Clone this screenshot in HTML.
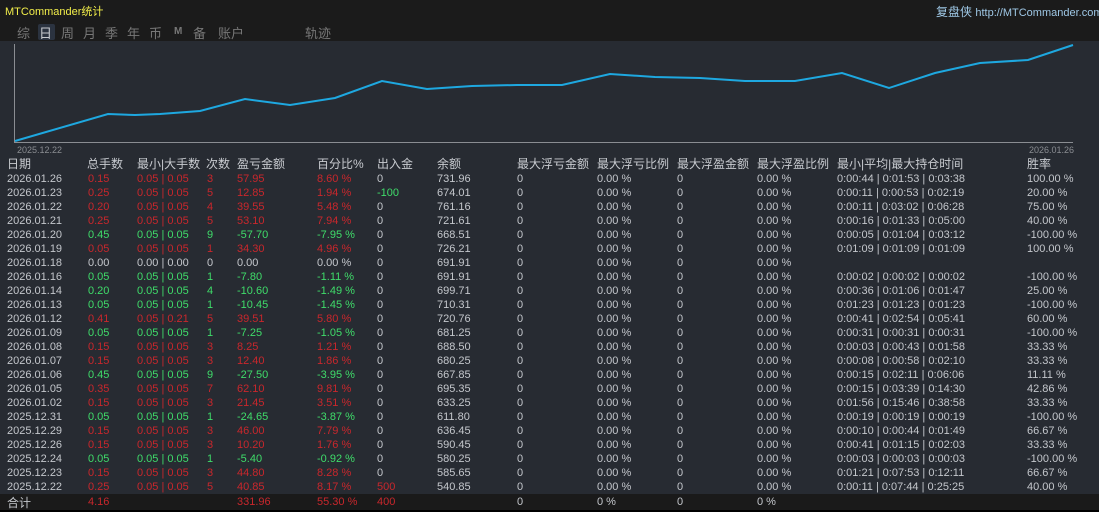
<!DOCTYPE html>
<html><head><meta charset="utf-8"><style>
*{margin:0;padding:0;box-sizing:border-box}
body{width:1099px;height:512px;overflow:hidden;background:#272b32;font-family:"Liberation Sans","Noto Sans CJK SC",sans-serif;position:relative;color:#c4c7cc}
#top{position:absolute;left:0;top:0;width:1099px;height:41px;background:#1b1b1b}
.t{position:absolute;white-space:nowrap}
.r{color:#c9272c}.g{color:#3fdc6a}
.row{position:absolute;left:0;width:1099px;height:14px;font-size:11px;line-height:14px}
.row span{position:absolute;white-space:nowrap}
.hd{position:absolute;top:156px;font-size:12px;line-height:16px;color:#c8cbd0;white-space:nowrap}
.tb{position:absolute;top:23px;font-size:13px;color:#777}
#tot{position:absolute;left:0;top:494px;width:1099px;height:16px;background:#1a1a1a}
</style></head><body>
<div id="top"></div>
<div class="t" style="left:5px;top:3px;font-size:11px;color:#f2ee4a">MTCommander统计</div>
<div class="t" style="left:936px;top:3px;font-size:12px;color:#9fc8e6">复盘侠 <span style="font-size:11px">http://MTCommander.com</span></div>
<div class="t" style="left:38px;top:24px;width:17px;height:16px;background:#2b3340;border-radius:2px"></div>
<div class="tb" style="left:17px">综</div><div class="tb" style="left:39px;color:#c8cbd0">日</div><div class="tb" style="left:61px">周</div><div class="tb" style="left:83px">月</div><div class="tb" style="left:105px">季</div><div class="tb" style="left:127px">年</div><div class="tb" style="left:149px">币</div><div class="tb" style="left:174px;font-size:10px;font-weight:bold;top:26px">M</div><div class="tb" style="left:193px">备</div><div class="tb" style="left:218px">账户</div>
<div class="tb" style="left:305px">轨迹</div>
<svg class="t" style="left:0;top:41px" width="1099" height="115">
<line x1="14.5" y1="3" x2="14.5" y2="101" stroke="#8a8d92"/>
<line x1="14" y1="101.5" x2="1073" y2="101.5" stroke="#8a8d92"/>
<polyline fill="none" stroke="#1ea8e0" stroke-width="2" points="15,100 108,73 135,74 160,73 200,70 245,58 290,64 335,57 382,40 427,48 472,45 517,44 562,44 610,33 655,36 700,37 745,40 795,40 842,32 889,47 935,32 980,22 1028,19 1073,4"/>
<text x="17" y="112" font-size="9" fill="#8a8d92" font-family="Liberation Sans">2025.12.22</text>
<text x="1029" y="112" font-size="9" fill="#8a8d92" font-family="Liberation Sans">2026.01.26</text>
</svg>
<div class="hd" style="left:7px">日期</div><div class="hd" style="left:87px">总手数</div><div class="hd" style="left:137px">最小|大手数</div><div class="hd" style="left:206px">次数</div><div class="hd" style="left:237px">盈亏金额</div><div class="hd" style="left:317px">百分比%</div><div class="hd" style="left:377px">出入金</div><div class="hd" style="left:437px">余额</div><div class="hd" style="left:517px">最大浮亏金额</div><div class="hd" style="left:597px">最大浮亏比例</div><div class="hd" style="left:677px">最大浮盈金额</div><div class="hd" style="left:757px">最大浮盈比例</div><div class="hd" style="left:837px">最小|平均|最大持仓时间</div><div class="hd" style="left:1027px">胜率</div>
<div id="rows"></div>
<div id="tot"></div>
<div class="t" style="left:7px;top:494px;font-size:12px">合计</div>
<div class="row" style="top:495px"><span class="r" style="left:88px">4.16</span><span class="r" style="left:237px">331.96</span><span class="r" style="left:317px">55.30 %</span><span class="r" style="left:377px">400</span><span style="left:517px">0</span><span style="left:597px">0 %</span><span style="left:677px">0</span><span style="left:757px">0 %</span></div>
<div class="t" style="left:0;top:510px;width:1099px;height:2px;background:#000"></div>
<script>
var d=[
["2026.01.26","r","0.15","0.05 | 0.05","3","57.95","8.60 %","0","731.96","0:00:44 | 0:01:53 | 0:03:38","100.00 %"],
["2026.01.23","r","0.25","0.05 | 0.05","5","12.85","1.94 %","-100","674.01","0:00:11 | 0:00:53 | 0:02:19","20.00 %"],
["2026.01.22","r","0.20","0.05 | 0.05","4","39.55","5.48 %","0","761.16","0:00:11 | 0:03:02 | 0:06:28","75.00 %"],
["2026.01.21","r","0.25","0.05 | 0.05","5","53.10","7.94 %","0","721.61","0:00:16 | 0:01:33 | 0:05:00","40.00 %"],
["2026.01.20","g","0.45","0.05 | 0.05","9","-57.70","-7.95 %","0","668.51","0:00:05 | 0:01:04 | 0:03:12","-100.00 %"],
["2026.01.19","r","0.05","0.05 | 0.05","1","34.30","4.96 %","0","726.21","0:01:09 | 0:01:09 | 0:01:09","100.00 %"],
["2026.01.18","w","0.00","0.00 | 0.00","0","0.00","0.00 %","0","691.91","",""],
["2026.01.16","g","0.05","0.05 | 0.05","1","-7.80","-1.11 %","0","691.91","0:00:02 | 0:00:02 | 0:00:02","-100.00 %"],
["2026.01.14","g","0.20","0.05 | 0.05","4","-10.60","-1.49 %","0","699.71","0:00:36 | 0:01:06 | 0:01:47","25.00 %"],
["2026.01.13","g","0.05","0.05 | 0.05","1","-10.45","-1.45 %","0","710.31","0:01:23 | 0:01:23 | 0:01:23","-100.00 %"],
["2026.01.12","r","0.41","0.05 | 0.21","5","39.51","5.80 %","0","720.76","0:00:41 | 0:02:54 | 0:05:41","60.00 %"],
["2026.01.09","g","0.05","0.05 | 0.05","1","-7.25","-1.05 %","0","681.25","0:00:31 | 0:00:31 | 0:00:31","-100.00 %"],
["2026.01.08","r","0.15","0.05 | 0.05","3","8.25","1.21 %","0","688.50","0:00:03 | 0:00:43 | 0:01:58","33.33 %"],
["2026.01.07","r","0.15","0.05 | 0.05","3","12.40","1.86 %","0","680.25","0:00:08 | 0:00:58 | 0:02:10","33.33 %"],
["2026.01.06","g","0.45","0.05 | 0.05","9","-27.50","-3.95 %","0","667.85","0:00:15 | 0:02:11 | 0:06:06","11.11 %"],
["2026.01.05","r","0.35","0.05 | 0.05","7","62.10","9.81 %","0","695.35","0:00:15 | 0:03:39 | 0:14:30","42.86 %"],
["2026.01.02","r","0.15","0.05 | 0.05","3","21.45","3.51 %","0","633.25","0:01:56 | 0:15:46 | 0:38:58","33.33 %"],
["2025.12.31","g","0.05","0.05 | 0.05","1","-24.65","-3.87 %","0","611.80","0:00:19 | 0:00:19 | 0:00:19","-100.00 %"],
["2025.12.29","r","0.15","0.05 | 0.05","3","46.00","7.79 %","0","636.45","0:00:10 | 0:00:44 | 0:01:49","66.67 %"],
["2025.12.26","r","0.15","0.05 | 0.05","3","10.20","1.76 %","0","590.45","0:00:41 | 0:01:15 | 0:02:03","33.33 %"],
["2025.12.24","g","0.05","0.05 | 0.05","1","-5.40","-0.92 %","0","580.25","0:00:03 | 0:00:03 | 0:00:03","-100.00 %"],
["2025.12.23","r","0.15","0.05 | 0.05","3","44.80","8.28 %","0","585.65","0:01:21 | 0:07:53 | 0:12:11","66.67 %"],
["2025.12.22","r","0.25","0.05 | 0.05","5","40.85","8.17 %","500","540.85","0:00:11 | 0:07:44 | 0:25:25","40.00 %"]];
var h="";
d.forEach(function(r,i){
var c=r[1]=="w"?"":r[1];var io=r[7]=="0"?"":(r[7][0]=="-"?"g":"r");
h+='<div class="row" style="top:'+(172+i*14)+'px"><span style="left:7px">'+r[0]+'</span><span class="'+c+'" style="left:88px">'+r[2]+'</span><span class="'+c+'" style="left:137px">'+r[3]+'</span><span class="'+c+'" style="left:207px">'+r[4]+'</span><span class="'+c+'" style="left:237px">'+r[5]+'</span><span class="'+c+'" style="left:317px">'+r[6]+'</span><span class="'+io+'" style="left:377px">'+r[7]+'</span><span style="left:437px">'+r[8]+'</span><span style="left:517px">0</span><span style="left:597px">0.00 %</span><span style="left:677px">0</span><span style="left:757px">0.00 %</span><span style="left:837px">'+r[9]+'</span><span style="left:1027px">'+r[10]+'</span></div>';
});
document.getElementById("rows").innerHTML=h;
</script>
</body></html>
